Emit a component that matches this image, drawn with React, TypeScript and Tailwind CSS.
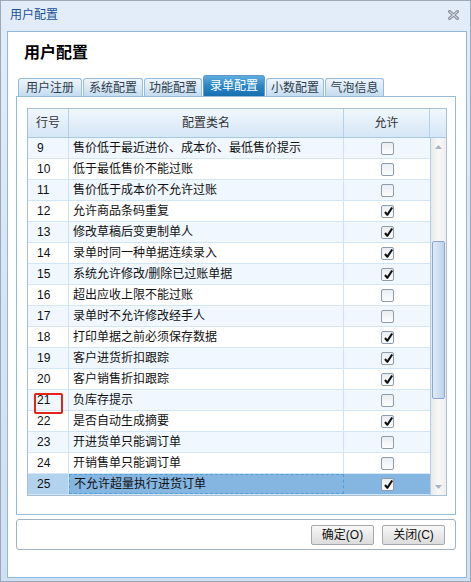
// 用户配置 dialog — 录单配置 tab

type Row = { no: number; name: string; allowed: boolean }

const ROWS: Row[] = [
  { no: 9, name: '售价低于最近进价、成本价、最低售价提示', allowed: false },
  { no: 10, name: '低于最低售价不能过账', allowed: false },
  { no: 11, name: '售价低于成本价不允许过账', allowed: false },
  { no: 12, name: '允许商品条码重复', allowed: true },
  { no: 13, name: '修改草稿后变更制单人', allowed: true },
  { no: 14, name: '录单时同一种单据连续录入', allowed: true },
  { no: 15, name: '系统允许修改/删除已过账单据', allowed: true },
  { no: 16, name: '超出应收上限不能过账', allowed: false },
  { no: 17, name: '录单时不允许修改经手人', allowed: false },
  { no: 18, name: '打印单据之前必须保存数据', allowed: true },
  { no: 19, name: '客户进货折扣跟踪', allowed: true },
  { no: 20, name: '客户销售折扣跟踪', allowed: true },
  { no: 21, name: '负库存提示', allowed: false },
  { no: 22, name: '是否自动生成摘要', allowed: true },
  { no: 23, name: '开进货单只能调订单', allowed: false },
  { no: 24, name: '开销售单只能调订单', allowed: false },
  { no: 25, name: '不允许超量执行进货订单', allowed: true },
]

const TABS = [
  { label: '用户注册', w: 'w-[64px]' },
  { label: '系统配置', w: 'w-[60px]' },
  { label: '功能配置', w: 'w-[58px]' },
  { label: '录单配置', w: 'w-[62px]' },
  { label: '小数配置', w: 'w-[58px]' },
  { label: '气泡信息', w: 'w-[59px]' },
]

function Checkbox({ checked }: { checked: boolean }) {
  return (
    <span className="relative w-[13px] h-[13px] border border-[#8f9cab] rounded-[2px] bg-gradient-to-b from-[#e9edf2] to-[#fdfdfe] flex items-center justify-center">
      {checked && (
        <svg width="11" height="11" viewBox="0 0 11 11" className="absolute left-[1px] top-0">
          <path d="M2 6 L4.3 8.8 L9.2 1.5" fill="none" stroke="#111" strokeWidth="2.1" strokeLinejoin="round" />
        </svg>
      )}
    </span>
  )
}

function CloseIcon() {
  return (
    <svg width="11" height="10" viewBox="0 0 11 10">
      <path d="M1.5 1.5 L9.5 8.5 M9.5 1.5 L1.5 8.5" stroke="#8c939c" strokeWidth="3" strokeLinecap="square" />
      <path d="M1.5 1.5 L9.5 8.5 M9.5 1.5 L1.5 8.5" stroke="#e6edf5" strokeWidth="1" />
    </svg>
  )
}

export default function App() {
  return (
    <div
      className="w-[471px] h-[582px] flex flex-col bg-gradient-to-b from-[#e3edf9] via-[#d6e5f6] to-[#cfe0f3] border border-[#9ba9b9] text-[12px] text-[#111]"
      style={{ fontFamily: '"Liberation Sans", "Noto Sans CJK SC", sans-serif' }}
    >
      {/* Title bar */}
      <div className="h-[30px] shrink-0 flex items-center justify-between pl-[9px] pr-[11px]">
        <span className="text-[12px] text-[#1a4f98] leading-none -mt-[2px]">用户配置</span>
        <span className="-mt-[2px]"><CloseIcon /></span>
      </div>

      {/* Body */}
      <div className="ml-[6px] w-[460px] h-[547px] bg-white border border-[#8fb8da] flex flex-col pl-[8px]">
        <div className="h-[42px] shrink-0 flex items-start pt-[11px] pl-[8px]">
          <span className="text-[16px] font-bold leading-[20px] text-black">用户配置</span>
        </div>

        {/* Tabs */}
        <div className="h-[21px] mt-[1px] shrink-0 flex items-end pl-[2px] gap-[1px]">
          {TABS.map((t) =>
            t.label === '录单配置' ? (
              <div
                key={t.label}
                className={`${t.w} h-[21px] flex items-center justify-center rounded-t-[3px] border border-b-0 border-[#5b9acb] bg-gradient-to-b from-[#5daddf] via-[#2a86c4] to-[#1670b0] text-white`}
              >
                {t.label}
              </div>
            ) : (
              <div
                key={t.label}
                className={`${t.w} h-[18px] flex items-center justify-center rounded-t-[3px] border border-b-0 border-[#98bcd9] bg-gradient-to-b from-[#eef5fc] via-[#dbe9f6] to-[#c3dbef] text-[#2e3d4c]`}
              >
                {t.label}
              </div>
            )
          )}
        </div>

        {/* Tab panel */}
        <div className="w-[440px] h-[419px] shrink-0 border border-[#95bcd8] pl-[10px] pt-[11px]">
          <div className="relative w-[420px] border border-[#a9c0d4] flex flex-col">
            {/* Header */}
            <div className="h-[29px] flex border-b border-[#a9c8e2] bg-gradient-to-b from-[#f1f7fd] to-[#d5e6f6] text-[#333]">
              <div className="w-[41px] border-r border-[#b5d0e8] flex items-center justify-center">行号</div>
              <div className="w-[275px] border-r border-[#b5d0e8] flex items-center justify-center">配置类名</div>
              <div className="w-[86px] border-r border-[#b5d0e8] flex items-center justify-center">允许</div>
              <div className="flex-1" />
            </div>

            {/* Body */}
            <div className="flex">
              <div className="flex flex-col w-[402px]">
                {ROWS.map((r, i) => {
                  const sel = r.no === 25
                  const bg = sel ? '' : i % 2 === 0 ? 'bg-[#f0f7fe]' : 'bg-white'
                  return (
                    <div key={r.no} className={`h-[21px] flex border-b border-[#d3e6f6] ${bg}`}>
                      <div className={`w-[41px] border-r border-[#cfe2f3] flex items-center pl-[9px] ${sel ? 'bg-[#b3d2ee]' : ''}`}>
                        {r.no}
                      </div>
                      <div
                        className={`w-[275px] flex items-center pl-[4px] ${
                          sel ? 'bg-[#85b5e1] border border-dashed border-[#4f9fd8]' : 'border-r border-[#cfe2f3]'
                        }`}
                      >
                        {r.name}
                      </div>
                      <div className={`flex-1 flex items-center justify-center ${sel ? 'bg-[#85b5e1]' : ''}`}>
                        <Checkbox checked={r.allowed} />
                      </div>
                    </div>
                  )
                })}
              </div>

              {/* Scrollbar */}
              <div className="flex-1 border-l border-[#b5cde2] flex flex-col bg-gradient-to-r from-[#e9e9e9] via-[#f8f8f8] to-[#eeeeee]">
                <div className="h-[17px] flex items-center justify-center">
                  <svg width="7" height="4" viewBox="0 0 7 4"><path d="M0 4 L3.5 0 L7 4 Z" fill="#a9b1bb" /></svg>
                </div>
                <div className="h-[86px]" />
                <div className="h-[158px] mx-[1px] rounded-[2px] border border-[#8aa6d6] bg-gradient-to-r from-[#dfeaf7] via-[#cfe0f3] to-[#bcd3ec]" />
                <div className="flex-1" />
                <div className="h-[17px] flex items-center justify-center">
                  <svg width="7" height="4" viewBox="0 0 7 4"><path d="M0 0 L7 0 L3.5 4 Z" fill="#a9b1bb" /></svg>
                </div>
              </div>
            </div>

            {/* Annotation box */}
            <div className="absolute left-[6px] top-[284px] w-[29px] h-[21px] border-2 border-[#e3241b] rounded-[2px]" />
          </div>
        </div>

        {/* Button bar */}
        <div className="w-[440px] h-[31px] mt-[4px] shrink-0 border border-[#a3b1c0] rounded-[3px] flex items-center justify-end gap-[8px] pr-[10px]">
          {['确定(O)', '关闭(C)'].map((b) => (
            <button
              key={b}
              className="w-[63px] h-[20px] flex items-center justify-center border border-[#a5a8ac] rounded-[2px] bg-gradient-to-b from-[#f8f8f8] to-[#dcdcdc] text-[12px] text-[#111]"
            >
              {b}
            </button>
          ))}
        </div>
      </div>
    </div>
  )
}
